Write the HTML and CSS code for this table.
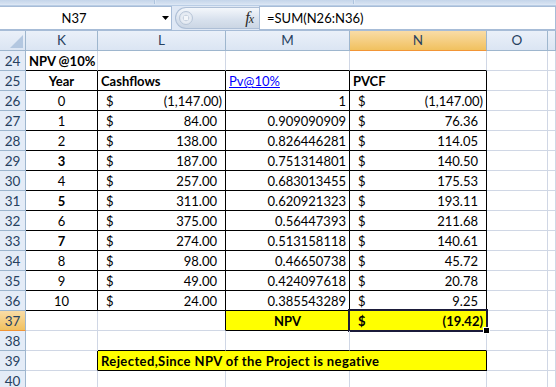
FILE: index.html
```html
<!DOCTYPE html>
<html lang="en">
<head>
<meta charset="utf-8">
<title>NPV @10%</title>
<link rel="stylesheet" href="styles.css">
</head>
<body>
<div class="app">
  <div class="ribbon-edge">
    <span class="edge-seg seg-a"></span>
    <span class="edge-seg seg-b"></span>
    <span class="edge-seg seg-c"></span>
  </div>

  <div class="formula-bar">
    <div class="name-box">
      <span class="name">N37</span>
      <svg class="drop" width="7" height="4" viewBox="0 0 7 4"><path d="M0 0H7L3.5 4Z" fill="#000"/></svg>
    </div>
    <div class="fx-pill">
      <span class="grip"></span>
      <span class="fx">f<span class="fx-x">x</span></span>
    </div>
    <div class="formula">=SUM(N26:N36)</div>
  </div>

  <div class="sheet">
    <!-- column headers -->
    <div class="corner"><span class="corner-tri"></span></div>
    <div class="colh">K</div>
    <div class="colh">L</div>
    <div class="colh">M</div>
    <div class="colh sel">N</div>
    <div class="colh">O</div>
    <div class="colh"></div>

    <!-- 24 -->
    <div class="rowh">24</div>
    <div class="c bold bb">NPV @10%</div>
    <div class="c bb"></div>
    <div class="c bb"></div>
    <div class="c bb"></div>
    <div class="c"></div>
    <div class="c"></div>

    <!-- 25 -->
    <div class="rowh">25</div>
    <div class="c b bold center">Year</div>
    <div class="c b bold">Cashflows</div>
    <div class="c b"><span class="link">Pv@10%</span></div>
    <div class="c b bold">PVCF</div>
    <div class="c"></div>
    <div class="c"></div>

    <!-- 26 -->
    <div class="rowh">26</div>
    <div class="c b center">0</div>
    <div class="c b acct"><span>$</span><span class="neg">(1,147.00)</span></div>
    <div class="c b right">1</div>
    <div class="c b acct"><span>$</span><span class="neg">(1,147.00)</span></div>
    <div class="c"></div>
    <div class="c"></div>

    <!-- 27 -->
    <div class="rowh">27</div>
    <div class="c b center">1</div>
    <div class="c b acct"><span>$</span><span class="pos">84.00</span></div>
    <div class="c b right">0.909090909</div>
    <div class="c b acct"><span>$</span><span class="pos">76.36</span></div>
    <div class="c"></div>
    <div class="c"></div>

    <!-- 28 -->
    <div class="rowh">28</div>
    <div class="c b center">2</div>
    <div class="c b acct"><span>$</span><span class="pos">138.00</span></div>
    <div class="c b right">0.826446281</div>
    <div class="c b acct"><span>$</span><span class="pos">114.05</span></div>
    <div class="c"></div>
    <div class="c"></div>

    <!-- 29 -->
    <div class="rowh">29</div>
    <div class="c b center bold">3</div>
    <div class="c b acct"><span>$</span><span class="pos">187.00</span></div>
    <div class="c b right">0.751314801</div>
    <div class="c b acct"><span>$</span><span class="pos">140.50</span></div>
    <div class="c"></div>
    <div class="c"></div>

    <!-- 30 -->
    <div class="rowh">30</div>
    <div class="c b center">4</div>
    <div class="c b acct"><span>$</span><span class="pos">257.00</span></div>
    <div class="c b right">0.683013455</div>
    <div class="c b acct"><span>$</span><span class="pos">175.53</span></div>
    <div class="c"></div>
    <div class="c"></div>

    <!-- 31 -->
    <div class="rowh">31</div>
    <div class="c b center bold">5</div>
    <div class="c b acct"><span>$</span><span class="pos">311.00</span></div>
    <div class="c b right">0.620921323</div>
    <div class="c b acct"><span>$</span><span class="pos">193.11</span></div>
    <div class="c"></div>
    <div class="c"></div>

    <!-- 32 -->
    <div class="rowh">32</div>
    <div class="c b center">6</div>
    <div class="c b acct"><span>$</span><span class="pos">375.00</span></div>
    <div class="c b right">0.56447393</div>
    <div class="c b acct"><span>$</span><span class="pos">211.68</span></div>
    <div class="c"></div>
    <div class="c"></div>

    <!-- 33 -->
    <div class="rowh">33</div>
    <div class="c b center bold">7</div>
    <div class="c b acct"><span>$</span><span class="pos">274.00</span></div>
    <div class="c b right">0.513158118</div>
    <div class="c b acct"><span>$</span><span class="pos">140.61</span></div>
    <div class="c"></div>
    <div class="c"></div>

    <!-- 34 -->
    <div class="rowh">34</div>
    <div class="c b center">8</div>
    <div class="c b acct"><span>$</span><span class="pos">98.00</span></div>
    <div class="c b right">0.46650738</div>
    <div class="c b acct"><span>$</span><span class="pos">45.72</span></div>
    <div class="c"></div>
    <div class="c"></div>

    <!-- 35 -->
    <div class="rowh">35</div>
    <div class="c b center">9</div>
    <div class="c b acct"><span>$</span><span class="pos">49.00</span></div>
    <div class="c b right">0.424097618</div>
    <div class="c b acct"><span>$</span><span class="pos">20.78</span></div>
    <div class="c"></div>
    <div class="c"></div>

    <!-- 36 -->
    <div class="rowh">36</div>
    <div class="c b center">10</div>
    <div class="c b acct"><span>$</span><span class="pos">24.00</span></div>
    <div class="c b right">0.385543289</div>
    <div class="c b acct"><span>$</span><span class="pos">9.25</span></div>
    <div class="c"></div>
    <div class="c"></div>

    <!-- 37 -->
    <div class="rowh sel">37</div>
    <div class="c"></div>
    <div class="c br"></div>
    <div class="c b hl bold center">NPV</div>
    <div class="c b hl bold acct active"><span>$</span><span class="neg">(19.42)</span></div>
    <div class="c"></div>
    <div class="c"></div>

    <!-- 38 -->
    <div class="rowh">38</div>
    <div class="c"></div>
    <div class="c bb"></div>
    <div class="c bb"></div>
    <div class="c bb"></div>
    <div class="c"></div>
    <div class="c"></div>

    <!-- 39 -->
    <div class="rowh">39</div>
    <div class="c br"></div>
    <div class="c b hl bold span3 note">Rejected,Since NPV of the Project is negative</div>
    <div class="c"></div>
    <div class="c"></div>

    <!-- 40 -->
    <div class="rowh">40</div>
    <div class="c"></div>
    <div class="c"></div>
    <div class="c"></div>
    <div class="c"></div>
    <div class="c"></div>
    <div class="c"></div>
  </div>
</div>
</body>
</html>
```

FILE: styles.css
```css
html, body {
  margin: 0;
  padding: 0;
  background: #ffffff;
}

.app {
  width: 556px;
  height: 387px;
  overflow: hidden;
  font-family: "Lato", "Open Sans", sans-serif;
  font-size: 13px;
  color: #000;
}

/* bottom edge of the ribbon */
.ribbon-edge {
  height: 6px;
  display: flex;
  background: #dbe6f4;
  border-bottom: 1px solid #b9cde5;
  box-sizing: border-box;
}
.edge-seg {
  height: 4px;
  background: linear-gradient(#c4d5ea, #d6e2f1);
  border-right: 1px solid #aec4de;
}
.seg-a { width: 154px; }
.seg-b { width: 197px; margin-left: 1px; }
.seg-c { flex: 1; margin-left: 1px; border-right: 0; }

/* formula bar */
.formula-bar {
  height: 25px;
  display: flex;
  align-items: stretch;
  background: #dfe8f5;
  border-bottom: 1px solid #a7bcd7;
  box-sizing: border-box;
}
.name-box {
  width: 172px;
  background: #fff;
  border: 1px solid #a7bcd7;
  border-left: 0;
  box-sizing: border-box;
  display: flex;
  align-items: center;
}
.name {
  width: 148px;
  text-align: center;
  font-size: 13px;
}
.drop {
  margin-left: 14px;
}
.fx-pill {
  width: 84px;
  margin-left: 3px;
  margin-top: 1px;
  margin-bottom: 1px;
  border-radius: 12px 0 0 12px;
  background: linear-gradient(#f4f7fb, #d9e2ee 55%, #cbd6e4);
  border: 1px solid #aebfd6;
  border-right: 0;
  box-sizing: border-box;
  display: flex;
  align-items: center;
  justify-content: space-between;
  padding: 0 6px 0 3px;
}
.grip {
  width: 14px;
  height: 14px;
  border-radius: 50%;
  background: radial-gradient(circle at 50% 50%, #f3f6fa 25%, #c9d3e0 30%, #e9eef5 45%, #d6dfea 100%);
  border: 1px solid #b8c6d8;
  box-sizing: border-box;
}
.fx {
  font-family: "Liberation Serif", serif;
  font-style: italic;
  font-size: 16px;
  color: #2a2a2a;
  letter-spacing: -1px;
}
.fx-x {
  font-size: 12px;
}
.formula {
  flex: 1;
  background: #fff;
  border: 1px solid #a7bcd7;
  box-sizing: border-box;
  padding-left: 7px;
  line-height: 22px;
  font-size: 13px;
}

/* worksheet grid */
.sheet {
  display: grid;
  grid-template-columns: 26px 72px 128px 124px 137px 61px 8px;
  grid-auto-rows: 20px;
}

.corner,
.colh,
.rowh {
  background: linear-gradient(#eaf0f9, #dbe5f3);
  border-right: 1px solid #9eb6ce;
  border-bottom: 1px solid #9eb6ce;
  box-sizing: border-box;
  color: #27415f;
  text-align: center;
  line-height: 19px;
  font-size: 13.5px;
}
.rowh {
  background: #e4ecf7;
  line-height: 20px;
}
.colh.sel,
.rowh.sel {
  background: linear-gradient(#f9dca6, #f1c15f);
  border-bottom-color: #f29536;
}
.corner {
  position: relative;
}
.corner-tri {
  position: absolute;
  right: 2px;
  bottom: 2px;
  width: 0;
  height: 0;
  border-left: 13px solid transparent;
  border-bottom: 13px solid #b3c7e0;
}

.c {
  border-right: 1px solid #d0d7e5;
  border-bottom: 1px solid #d0d7e5;
  box-sizing: border-box;
  padding: 0 3px;
  line-height: 21px;
  white-space: nowrap;
  position: relative;
}
.b {
  border-right-color: #000;
  border-bottom-color: #000;
}
.bb { border-bottom-color: #000; }
.br { border-right-color: #000; }

.bold { font-weight: 700; }
.center { text-align: center; }
.right { text-align: right; }
.hl { background: #ffff00; }
.span3 { grid-column: span 3; }
.note { letter-spacing: 0.4px; }

.link {
  color: #0000ff;
  text-decoration: underline;
}

/* accounting format: "$" at the left, amount at the right */
.acct {
  display: flex;
  justify-content: space-between;
  padding-left: 8px;
  padding-right: 3px;
}
.acct .pos {
  padding-right: 5px;
}

/* active cell frame and fill handle */
.active::after {
  content: "";
  position: absolute;
  left: -2px;
  top: -2px;
  right: -2px;
  bottom: -2px;
  border: 2px solid #1b1b3a;
  pointer-events: none;
}
.active::before {
  content: "";
  position: absolute;
  right: -4px;
  bottom: -4px;
  width: 5px;
  height: 5px;
  background: #000;
  border: 1px solid #fff;
  z-index: 1;
}
```
